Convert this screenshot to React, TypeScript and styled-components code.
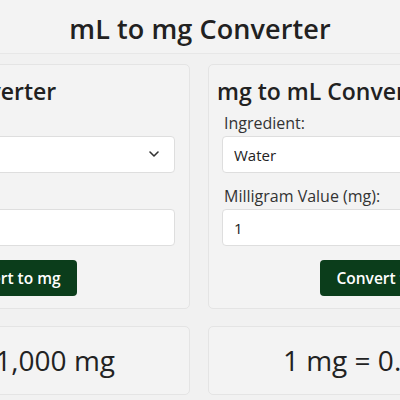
import React, { useState } from 'react';
import styled, { createGlobalStyle } from 'styled-components';

const GlobalStyles = createGlobalStyle`
  html, body {
    margin: 0;
    padding: 0;
    background: #f1f1f1;
    overflow: hidden;
  }
  body {
    font-family: 'Open Sans', 'Noto Sans', sans-serif;
    color: #212121;
  }
  * {
    box-sizing: border-box;
  }
`;

const Header = styled.header`
  height: 54px;
  padding-top: 4px;
  display: flex;
  align-items: center;
  justify-content: center;
  border-bottom: 1px solid #e7e7e7;
  background: #f3f3f3;
`;

const PageTitle = styled.h1`
  margin: 0;
  font-size: 27px;
  font-weight: 600;
  letter-spacing: 0.1px;
`;

const Main = styled.main`
  padding: 10px 2px 0 0;
  display: flex;
  flex-direction: column;
  gap: 17px;
`;

const Row = styled.div`
  display: flex;
  justify-content: center;
  gap: 18px;
`;

const Card = styled.section`
  flex: 0 0 364px;
  background: #f3f3f3;
  border: 1px solid #e4e4e4;
  border-radius: 5px;
  padding: 12px 8px 12px;
`;

const CardTitle = styled.h2`
  margin: 0 0 8px;
  font-size: 23px;
  font-weight: 600;
  line-height: 28px;
`;

const Form = styled.div`
  padding: 0 6px 0 5px;
  display: flex;
  flex-direction: column;
`;

const Label = styled.label`
  display: block;
  padding-left: 2px;
  font-size: 16px;
  line-height: 20px;
  margin-bottom: 3px;
  color: #333;
`;

const Field = styled.div`
  position: relative;
  margin-bottom: 13px;
`;

const Select = styled.select`
  width: 100%;
  height: 37px;
  appearance: none;
  background: #fff;
  border: 1px solid #dedede;
  border-radius: 4px;
  padding: 0 11px;
  font-family: inherit;
  font-size: 15px;
  color: #222;
`;

const Chevron = styled.svg`
  position: absolute;
  right: 15px;
  top: 12px;
  width: 12px;
  height: 12px;
  pointer-events: none;
`;

const Input = styled.input`
  width: 100%;
  height: 37px;
  background: #fff;
  border: 1px solid #dedede;
  border-radius: 4px;
  padding: 0 11px;
  font-family: inherit;
  font-size: 15px;
  color: #222;
`;

const Button = styled.button`
  align-self: center;
  height: 36px;
  margin-top: 1px;
  padding: 0 16px;
  border: none;
  border-radius: 4px;
  background: #0b3d1b;
  color: #fff;
  font-family: inherit;
  font-size: 15.5px;
  font-weight: 600;
`;

const ResultCard = styled.div`
  flex: 0 0 364px;
  height: 69px;
  padding-bottom: 1px;
  display: flex;
  align-items: center;
  justify-content: center;
  background: #f3f3f3;
  border: 1px solid #e4e4e4;
  border-radius: 5px;
  font-size: 28px;
  font-weight: 500;
  color: #222;
`;

type ConverterProps = {
  title: string;
  valueLabel: string;
  button: string;
};

function Converter({ title, valueLabel, button }: ConverterProps) {
  const [ingredient, setIngredient] = useState('water');
  const [value, setValue] = useState('1');

  return (
    <Card>
      <CardTitle>{title}</CardTitle>
      <Form>
        <Label>Ingredient:</Label>
        <Field>
          <Select value={ingredient} onChange={(e) => setIngredient(e.target.value)}>
            <option value="water">Water</option>
            <option value="milk">Milk</option>
            <option value="oil">Oil</option>
          </Select>
          <Chevron viewBox="0 0 12 12">
            <path d="M2 4l4 4 4-4" fill="none" stroke="#333" strokeWidth="1.6" strokeLinecap="round" strokeLinejoin="round" />
          </Chevron>
        </Field>
        <Label>{valueLabel}</Label>
        <Field>
          <Input value={value} onChange={(e) => setValue(e.target.value)} />
        </Field>
        <Button type="button">{button}</Button>
      </Form>
    </Card>
  );
}

export default function App() {
  return (
    <>
      <GlobalStyles />
      <Header>
        <PageTitle>mL to mg Converter</PageTitle>
      </Header>
      <Main>
        <Row>
          <Converter title="mL to mg Converter" valueLabel="Milliliter Value (mL):" button="Convert to mg" />
          <Converter title="mg to mL Converter" valueLabel="Milligram Value (mg):" button="Convert to mL" />
        </Row>
        <Row>
          <ResultCard>1 mL = 1,000 mg</ResultCard>
          <ResultCard>1 mg = 0.001 mL</ResultCard>
        </Row>
      </Main>
    </>
  );
}
